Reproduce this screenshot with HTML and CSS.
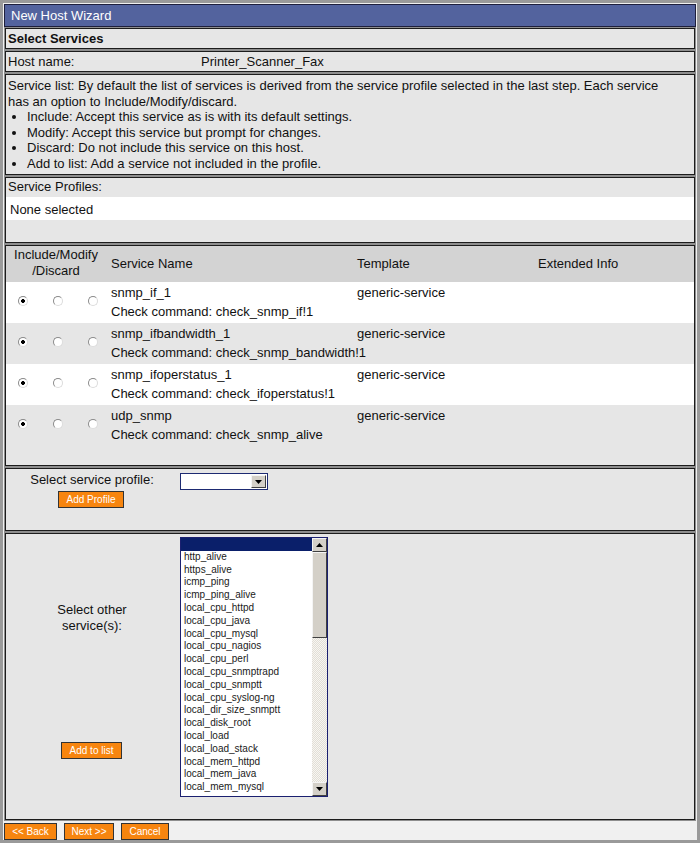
FILE: index.html
```html
<!DOCTYPE html>
<html>
<head>
<meta charset="utf-8">
<title>New Host Wizard</title>
<link rel="stylesheet" href="styles.css">
</head>
<body>
<div class="frame">
  <div class="titlebar">New Host Wizard</div>

  <div class="panel p-select">Select Services</div>

  <div class="panel p-host">
    <span class="host-label">Host name:</span>
    <span class="host-value">Printer_Scanner_Fax</span>
  </div>

  <div class="panel p-list">
    <div class="para">Service list: By default the list of services is derived from the service profile selected in the last step. Each service has an option to Include/Modify/discard.</div>
    <ul class="bullets">
      <li>Include: Accept this service as is with its default settings.</li>
      <li>Modify: Accept this service but prompt for changes.</li>
      <li>Discard: Do not include this service on this host.</li>
      <li>Add to list: Add a service not included in the profile.</li>
    </ul>
  </div>

  <div class="panel p-profiles">
    <div class="prof-label">Service Profiles:</div>
    <div class="prof-value">None selected</div>
  </div>

  <div class="panel p-table">
    <div class="svc-head">
      <div class="h-imd">Include/Modify<br>/Discard</div>
      <div class="h-cell">Service Name</div>
      <div class="h-cell">Template</div>
      <div class="h-cell">Extended Info</div>
    </div>

    <div class="svc-row odd">
      <div class="rcell"><input type="radio" class="radio" name="s1" checked></div>
      <div class="rcell"><input type="radio" class="radio" name="s1"></div>
      <div class="rcell"><input type="radio" class="radio" name="s1"></div>
      <div class="name">snmp_if_1</div>
      <div class="tmpl">generic-service</div>
      <div class="ext"></div>
      <div class="cmd">Check command: check_snmp_if!1</div>
    </div>

    <div class="svc-row even">
      <div class="rcell"><input type="radio" class="radio" name="s2" checked></div>
      <div class="rcell"><input type="radio" class="radio" name="s2"></div>
      <div class="rcell"><input type="radio" class="radio" name="s2"></div>
      <div class="name">snmp_ifbandwidth_1</div>
      <div class="tmpl">generic-service</div>
      <div class="ext"></div>
      <div class="cmd">Check command: check_snmp_bandwidth!1</div>
    </div>

    <div class="svc-row odd">
      <div class="rcell"><input type="radio" class="radio" name="s3" checked></div>
      <div class="rcell"><input type="radio" class="radio" name="s3"></div>
      <div class="rcell"><input type="radio" class="radio" name="s3"></div>
      <div class="name">snmp_ifoperstatus_1</div>
      <div class="tmpl">generic-service</div>
      <div class="ext"></div>
      <div class="cmd">Check command: check_ifoperstatus!1</div>
    </div>

    <div class="svc-row even">
      <div class="rcell"><input type="radio" class="radio" name="s4" checked></div>
      <div class="rcell"><input type="radio" class="radio" name="s4"></div>
      <div class="rcell"><input type="radio" class="radio" name="s4"></div>
      <div class="name">udp_snmp</div>
      <div class="tmpl">generic-service</div>
      <div class="ext"></div>
      <div class="cmd">Check command: check_snmp_alive</div>
    </div>
  </div>

  <div class="panel p-profile">
    <div class="lcol">
      <div class="sp-label">Select service profile:</div>
      <button class="btn">Add Profile</button>
    </div>
    <div class="rcol">
      <div class="dropdown">
        <span class="dd-arrow"><svg width="7" height="4" viewBox="0 0 7 4"><path d="M0 0H7L3.5 4Z" fill="#000"/></svg></span>
      </div>
    </div>
  </div>

  <div class="panel p-other">
    <div class="lcol">
      <div class="so-label">Select other<br>service(s):</div>
      <button class="btn btn-add">Add to list</button>
    </div>
    <div class="rcol">
      <div class="listbox">
        <div class="items">
          <div class="item selected">&nbsp;</div>
          <div class="item">http_alive</div>
          <div class="item">https_alive</div>
          <div class="item">icmp_ping</div>
          <div class="item">icmp_ping_alive</div>
          <div class="item">local_cpu_httpd</div>
          <div class="item">local_cpu_java</div>
          <div class="item">local_cpu_mysql</div>
          <div class="item">local_cpu_nagios</div>
          <div class="item">local_cpu_perl</div>
          <div class="item">local_cpu_snmptrapd</div>
          <div class="item">local_cpu_snmptt</div>
          <div class="item">local_cpu_syslog-ng</div>
          <div class="item">local_dir_size_snmptt</div>
          <div class="item">local_disk_root</div>
          <div class="item">local_load</div>
          <div class="item">local_load_stack</div>
          <div class="item">local_mem_httpd</div>
          <div class="item">local_mem_java</div>
          <div class="item">local_mem_mysql</div>
        </div>
        <div class="scrollbar">
          <div class="sb-btn"><svg width="7" height="4" viewBox="0 0 7 4"><path d="M0 4H7L3.5 0Z" fill="#000"/></svg></div>
          <div class="sb-thumb"></div>
          <div class="sb-track"></div>
          <div class="sb-btn"><svg width="7" height="4" viewBox="0 0 7 4"><path d="M0 0H7L3.5 4Z" fill="#000"/></svg></div>
        </div>
      </div>
    </div>
  </div>

  <div class="footer">
    <button class="btn btn-back">&lt;&lt; Back</button>
    <button class="btn btn-next">Next &gt;&gt;</button>
    <button class="btn btn-cancel">Cancel</button>
  </div>
</div>
</body>
</html>
```

FILE: styles.css
```css
html, body {
  margin: 0;
  padding: 0;
  background: #f0f0f0;
}

body {
  font-family: "Liberation Sans", Arial, sans-serif;
  font-size: 13px;
  color: #111;
}

.frame {
  width: 700px;
  height: 843px;
  box-sizing: border-box;
  border: 3px solid #9a9a9a;
  background: #f0f0f0;
  padding: 1px 1px 0 1px;
  display: flex;
  flex-direction: column;
}

.titlebar {
  height: 23px;
  flex: none;
  box-sizing: border-box;
  background: #53639e;
  border: 1px solid #1e1f3c;
  color: #fff;
  padding-left: 6px;
  line-height: 21px;
}

.panel {
  flex: none;
  margin: 1px 1px 0 1px;
  background: #e6e6e6;
  border: 1px solid #1c1c1c;
  box-shadow: 0 0 0 1px #8e8e8e;
  box-sizing: border-box;
}

.panel + .panel {
  margin-top: 2px;
}

.p-select {
  height: 21px;
  line-height: 19px;
  font-weight: bold;
  padding-left: 2px;
}

.p-host {
  height: 21px;
  line-height: 19px;
  display: flex;
  padding-left: 2px;
}

.host-label {
  width: 193px;
}

.p-list {
  height: 101px;
  padding: 3px 14px 0 2px;
  line-height: 15.6px;
}

.bullets {
  margin: 0;
  padding-left: 19px;
}

.p-profiles {
  height: 66px;
}

.prof-label {
  line-height: 17px;
  padding-left: 2px;
}

.prof-value {
  margin-top: 2px;
  background: #fff;
  height: 23px;
  box-sizing: border-box;
  padding: 3px 0 0 4px;
  line-height: 19px;
}

.p-table {
  height: 221px;
}

.svc-head {
  display: grid;
  grid-template-columns: 104px 246px 181px 1fr;
  background: #d3d3d3;
  height: 36px;
}

.h-imd {
  text-align: center;
  line-height: 16px;
  padding-top: 1px;
  padding-right: 4px;
}

.h-cell {
  line-height: 36px;
  padding-left: 1px;
}

.svc-row {
  display: grid;
  grid-template-columns: 34px 35px 35px 246px 181px 1fr;
  grid-template-rows: 19px 19px;
  height: 41px;
  box-sizing: border-box;
  padding-top: 1px;
  line-height: 19px;
}

.svc-row.odd {
  background: #fff;
}

.svc-row.even {
  background: #e6e6e6;
}

.rcell {
  grid-row: 1 / 3;
  display: flex;
  justify-content: center;
  align-items: flex-start;
}

.name, .tmpl, .ext {
  padding-left: 1px;
}

.cmd {
  grid-column: 4 / 7;
  padding-left: 1px;
}

.radio {
  -webkit-appearance: none;
  appearance: none;
  margin: 13px 0 0 0;
  width: 10px;
  height: 10px;
  border-radius: 50%;
  border: 1px solid;
  border-color: #8a8a8a #dcdcdc #dcdcdc #8a8a8a;
  background: #fff;
  box-sizing: border-box;
}

.radio:checked {
  background: radial-gradient(circle, #000 0, #000 1.6px, #fff 2.2px);
}

.p-profile {
  height: 63px;
  display: flex;
  align-items: flex-start;
}

.lcol {
  width: 172px;
  display: flex;
  flex-direction: column;
  align-items: center;
}

.rcol {
  margin-left: 2px;
}

.sp-label {
  margin-top: 2px;
  line-height: 17px;
}

.dropdown {
  margin-top: 4px;
  width: 88px;
  height: 17px;
  box-sizing: border-box;
  border: 1px solid #1d2a72;
  background: #fff;
  display: flex;
  justify-content: flex-end;
  padding: 1px;
}

.dd-arrow {
  width: 15px;
  height: 13px;
  box-sizing: border-box;
  background: #d4d0c8;
  border: 1px solid;
  border-color: #f4f4f4 #404040 #404040 #f4f4f4;
  display: flex;
  align-items: center;
  justify-content: center;
}

.btn {
  font-family: "Liberation Sans", Arial, sans-serif;
  font-size: 10px;
  color: #fff;
  background: #f7850f;
  border: 1px solid #333;
  height: 17px;
  padding: 0 4px;
  margin: 0;
  line-height: 15px;
  box-sizing: border-box;
  white-space: nowrap;
}

.p-profile .btn {
  margin-top: 3px;
  width: 66px;
  margin-left: -2px;
}

.p-other {
  height: 287px;
  display: flex;
  align-items: flex-start;
}

.so-label {
  margin-top: 68px;
  line-height: 16px;
  text-align: center;
}

.btn-add {
  margin-top: 108px;
  width: 61px;
  margin-left: -1px;
}

.listbox {
  margin-top: 3px;
  width: 148px;
  height: 260px;
  box-sizing: border-box;
  border: 1px solid #1b2070;
  background: #fff;
  display: flex;
  overflow: hidden;
}

.items {
  flex: 1;
  overflow: hidden;
}

.item {
  height: 12.8px;
  line-height: 12.8px;
  font-size: 10px;
  padding-left: 3px;
  white-space: nowrap;
  color: #1a1a1a;
}

.item.selected {
  background: #0a1f6a;
}

.scrollbar {
  width: 15px;
  display: flex;
  flex-direction: column;
}

.sb-btn {
  height: 14px;
  flex: none;
  box-sizing: border-box;
  background: #d4d0c8;
  border: 1px solid;
  border-color: #f4f4f4 #404040 #404040 #f4f4f4;
  display: flex;
  align-items: center;
  justify-content: center;
}

.sb-thumb {
  height: 86px;
  flex: none;
  box-sizing: border-box;
  background: #d4d0c8;
  border: 1px solid;
  border-color: #f4f4f4 #404040 #404040 #f4f4f4;
}

.sb-track {
  flex: 1;
  background-color: #f1efea;
  background-image: repeating-conic-gradient(#e2ded6 0 25%, #f7f6f2 0 50%);
  background-size: 2px 2px;
}

.footer {
  margin-top: 3px;
  display: flex;
  gap: 7px;
}

.btn-back {
  width: 53px;
}

.btn-next {
  width: 50px;
}

.btn-cancel {
  width: 48px;
}
```
